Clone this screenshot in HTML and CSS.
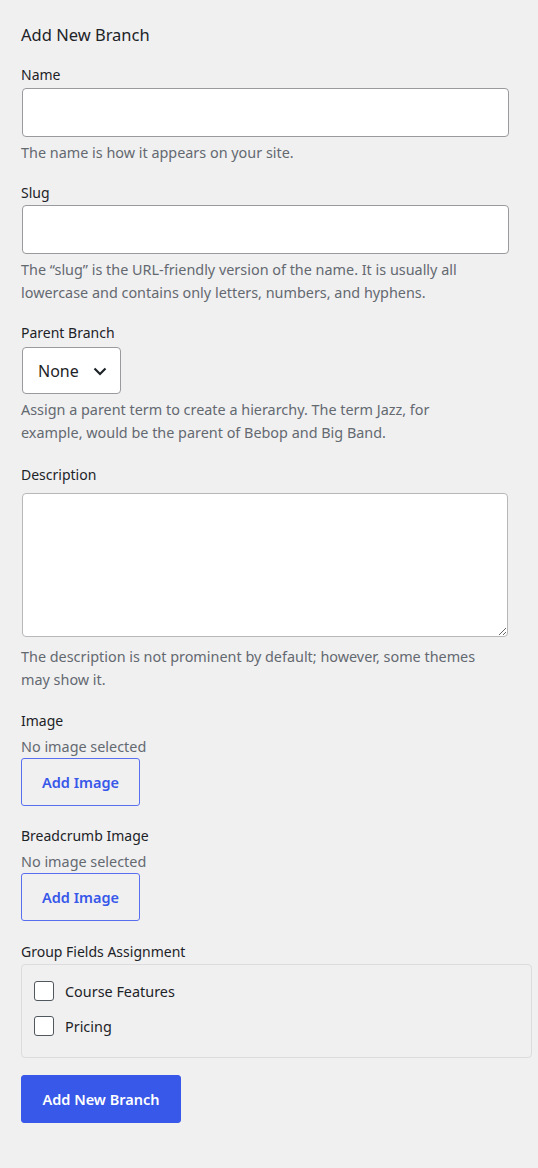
FILE: index.html
```html
<!DOCTYPE html>
<html lang="en">
<head>
<meta charset="utf-8">
<title>Add New Branch</title>
<link rel="stylesheet" href="styles.css">
</head>
<body>
<form class="form-wrap">
  <h2 class="title">Add New Branch</h2>

  <div class="field field-name">
    <label class="label">Name</label>
    <input class="text-input" type="text">
    <p class="help">The name is how it appears on your site.</p>
  </div>

  <div class="field field-slug">
    <label class="label">Slug</label>
    <input class="text-input" type="text">
    <p class="help">The “slug” is the URL-friendly version of the name. It is usually all lowercase and contains only letters, numbers, and hyphens.</p>
  </div>

  <div class="field field-parent">
    <label class="label">Parent Branch</label>
    <div class="select">
      <span class="select-value">None</span>
      <svg class="chevron" width="14" height="9" viewBox="0 0 14 9"><path d="M1.5 1.5 L7 7 L12.5 1.5" fill="none" stroke="#1d2327" stroke-width="2.2"/></svg>
    </div>
    <p class="help">Assign a parent term to create a hierarchy. The term Jazz, for example, would be the parent of Bebop and Big Band.</p>
  </div>

  <div class="field field-desc">
    <label class="label">Description</label>
    <textarea class="textarea"></textarea>
    <p class="help">The description is not prominent by default; however, some themes may show it.</p>
  </div>

  <div class="field field-image">
    <label class="label">Image</label>
    <div class="no-image">No image selected</div>
    <button type="button" class="btn-outline">Add Image</button>
  </div>

  <div class="field field-bimage">
    <label class="label">Breadcrumb Image</label>
    <div class="no-image">No image selected</div>
    <button type="button" class="btn-outline">Add Image</button>
  </div>

  <div class="field field-group">
    <label class="label">Group Fields Assignment</label>
    <div class="group-box">
      <label class="check-row"><span class="checkbox"></span><span>Course Features</span></label>
      <label class="check-row"><span class="checkbox"></span><span>Pricing</span></label>
    </div>
  </div>

  <button type="button" class="btn-primary">Add New Branch</button>
</form>
</body>
</html>
```

FILE: styles.css
```css
* { box-sizing: border-box; }

html, body {
  margin: 0;
  padding: 0;
  background: #f0f0f1;
}

body {
  font-family: "Noto Sans", "Open Sans", sans-serif;
  font-size: 14px;
  color: #1d2327;
  height: 1168px;
}

.form-wrap {
  padding: 23px 0 0 21px;
  width: 538px;
}

.title {
  margin: 0;
  font-size: 16.5px;
  font-weight: 400;
  line-height: 24px;
  color: #1d2327;
}

.field { display: flex; flex-direction: column; align-items: flex-start; }

.label {
  display: block;
  font-size: 14px;
  line-height: 22px;
  color: #1d2327;
}

.field-name { margin-top: 17px; }
.field-slug { margin-top: 18px; }
.field-parent { margin-top: 18px; }
.field-desc { margin-top: 20px; }
.field-image { margin-top: 19px; }
.field-bimage { margin-top: 19px; }
.field-group { margin-top: 20px; }

.text-input {
  display: block;
  width: 487px;
  height: 49px;
  margin: 2px 0 0 1px;
  border: 1px solid #9a9a9e;
  border-radius: 4px;
  background: #fff;
  font: inherit;
}

.field-slug .text-input { margin-top: 1px; }

.help {
  margin: 4px 0 0;
  font-size: 14.4px;
  line-height: 23px;
  color: #646970;
  width: 466px;
}

.select {
  margin: 3px 0 0 1px;
  width: 99px;
  height: 47px;
  border: 1px solid #9a9a9e;
  border-radius: 4px;
  background: #fff;
  display: flex;
  align-items: center;
  padding-left: 15px;
}

.select-value {
  font-size: 16px;
  color: #1d2327;
}

.chevron { margin-left: 14px; margin-top: 1px; }

.textarea {
  display: block;
  margin: 7px 0 0 1px;
  width: 486px;
  height: 144px;
  border: 1px solid #b8b8bb;
  border-radius: 4px;
  background: #fff;
  font: inherit;
  resize: vertical;
}

.field-desc .help { margin-top: 8px; }

.no-image {
  margin-top: 4px;
  font-size: 14.4px;
  line-height: 22px;
  color: #646970;
}

.btn-outline {
  margin-top: 0;
  width: 119px;
  height: 48px;
  border: 1px solid #5a6ff0;
  border-radius: 3px;
  background: transparent;
  color: #3858e9;
  font-family: inherit;
  font-size: 14.5px;
  font-weight: 600;
  padding: 0;
}

.group-box {
  margin-top: 1px;
  width: 511px;
  height: 94px;
  border: 1px solid #dcdcde;
  border-radius: 4px;
  padding: 16px 0 0 12px;
  display: flex;
  flex-direction: column;
  gap: 15px;
}

.check-row {
  display: flex;
  align-items: center;
  gap: 11px;
  height: 20px;
  font-size: 14.4px;
  color: #1d2327;
}

.checkbox {
  width: 20px;
  height: 20px;
  border: 1px solid #50575e;
  border-radius: 3px;
  background: #fff;
  flex: none;
}

.btn-primary {
  display: block;
  margin-top: 17px;
  width: 160px;
  height: 48px;
  border: 1px solid #3858e9;
  border-radius: 3px;
  background: #3858e9;
  color: #fff;
  font-family: inherit;
  font-size: 14.5px;
  font-weight: 600;
  padding: 0;
}
```
